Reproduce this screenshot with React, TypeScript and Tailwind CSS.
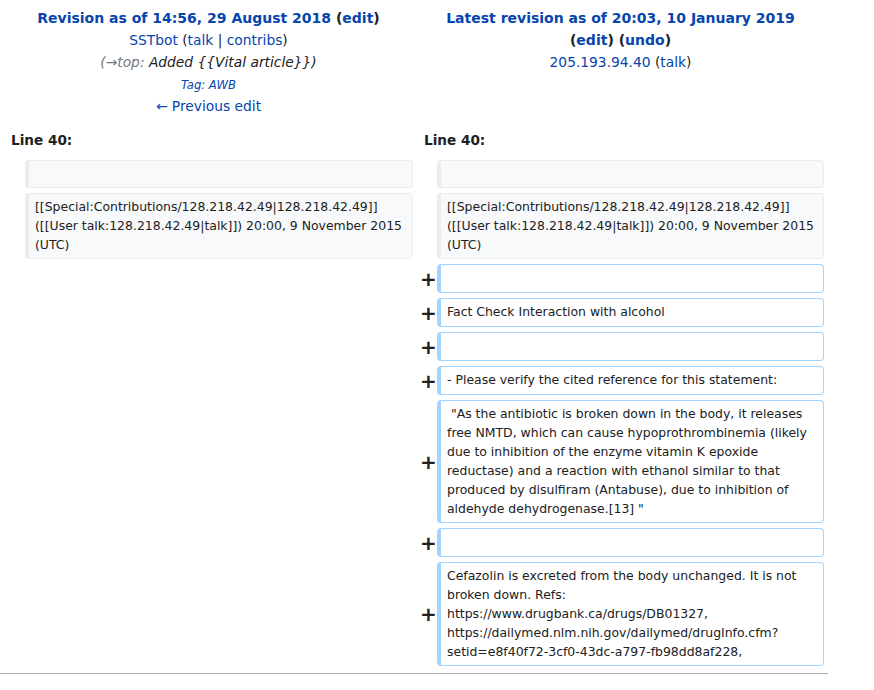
import React from "react"

const link = "text-[#0645ad]"

function ContextBox({ children }: { children?: React.ReactNode }) {
  return (
    <div className="rounded-[4px] border border-l-4 border-[#eaecf0] bg-[#f8f9fa] px-[6px] pt-[2.5px] pb-[4.5px] text-[12.45px] leading-[19px] text-[#202122] min-h-[28px]">
      {children}
    </div>
  )
}

function AddedBox({ children }: { children?: React.ReactNode }) {
  return (
    <div className="rounded-[4px] border border-l-4 border-[#a3d3ff] bg-white px-[6px] pt-[2.5px] pb-[4.5px] text-[12.45px] leading-[19px] text-[#202122] min-h-[29px]">
      {children}
    </div>
  )
}

function Plus() {
  return (
    <div className="flex items-center justify-center pl-[7px] text-[20px] font-bold leading-none text-[#202122]">+</div>
  )
}

const added: string[][] = [
  [],
  ["Fact Check Interaction with alcohol"],
  [],
  ["- Please verify the cited reference for this statement:"],
  [
    "\u00a0\"As the antibiotic is broken down in the body, it releases free NMTD, which can cause hypoprothrombinemia (likely due to inhibition of the enzyme vitamin K epoxide reductase) and a reaction with ethanol similar to that produced by disulfiram (Antabuse), due to inhibition of aldehyde dehydrogenase.[13] \"",
  ],
  [],
  [
    "Cefazolin is excreted from the body unchanged. It is not broken down. Refs:",
    "https://www.drugbank.ca/drugs/DB01327,",
    "https://dailymed.nlm.nih.gov/dailymed/drugInfo.cfm?",
    "setid=e8f40f72-3cf0-43dc-a797-fb98dd8af228,",
  ],
]

export default function App() {
  return (
    <div className="w-[874px] h-[690px] bg-white font-['DejaVu_Sans',sans-serif] text-[#202122] overflow-hidden">
      <div className="w-[828px]">
        {/* cabecera de revisiones */}
        <div className="grid grid-cols-[413px_415px] pt-[7px]">
          <div className="pl-[4px] text-center text-[13.8px] leading-[22px]">
            <div className="font-bold text-[14px]">
              <span className={link}>Revision as of 14:56, 29 August 2018</span> (<span className={link}>edit</span>)
            </div>
            <div>
              <span className={link}>SSTbot</span> (<span className={link}>talk</span> | <span className={link}>contribs</span>)
            </div>
            <div className="italic">
              <span className="text-[#72777d]">(→top:</span> Added {"{{"}Vital article{"}}"})
            </div>
            <div className="pt-[2px] italic text-[11.6px] leading-[20px]">
              <span className={link}>Tag</span>
              <span className={link}>: AWB</span>
            </div>
            <div>
              <span className={link}>← Previous edit</span>
            </div>
          </div>
          <div className="pl-[4px] pr-[4px] text-center text-[13.8px] leading-[22px]">
            <div className="font-bold text-[14px]">
              <span className={link}>Latest revision as of 20:03, 10 January 2019</span>
            </div>
            <div className="font-bold text-[14px]">
              (<span className={link}>edit</span>) (<span className={link}>undo</span>)
            </div>
            <div>
              <span className={link}>205.193.94.40</span> (<span className={link}>talk</span>)
            </div>
          </div>
        </div>

        {/* número de línea */}
        <div className="grid grid-cols-[413px_415px] pt-[13px] pb-[10px] text-[13.6px] font-bold leading-[20px]">
          <div className="pl-[11px]">Line 40:</div>
          <div className="pl-[11px]">Line 40:</div>
        </div>

        {/* filas del diff */}
        <div className="grid grid-cols-[25px_388px_24px_387px] gap-y-[5px]">
          <div />
          <ContextBox />
          <div />
          <ContextBox />

          <div />
          <ContextBox>
            [[Special:Contributions/128.218.42.49|128.218.42.49]] ([[User talk:128.218.42.49|talk]]) 20:00, 9 November 2015 (UTC)
          </ContextBox>
          <div />
          <ContextBox>
            [[Special:Contributions/128.218.42.49|128.218.42.49]] ([[User talk:128.218.42.49|talk]]) 20:00, 9 November 2015 (UTC)
          </ContextBox>

          {added.map((lines, i) => (
            <React.Fragment key={i}>
              <div />
              <div />
              <Plus />
              <AddedBox>
                {lines.map((l, j) => (
                  <div key={j}>{l}</div>
                ))}
              </AddedBox>
            </React.Fragment>
          ))}
        </div>

        <div className="mt-[7px] border-t border-[#a2a9b1]" />
      </div>
    </div>
  )
}
